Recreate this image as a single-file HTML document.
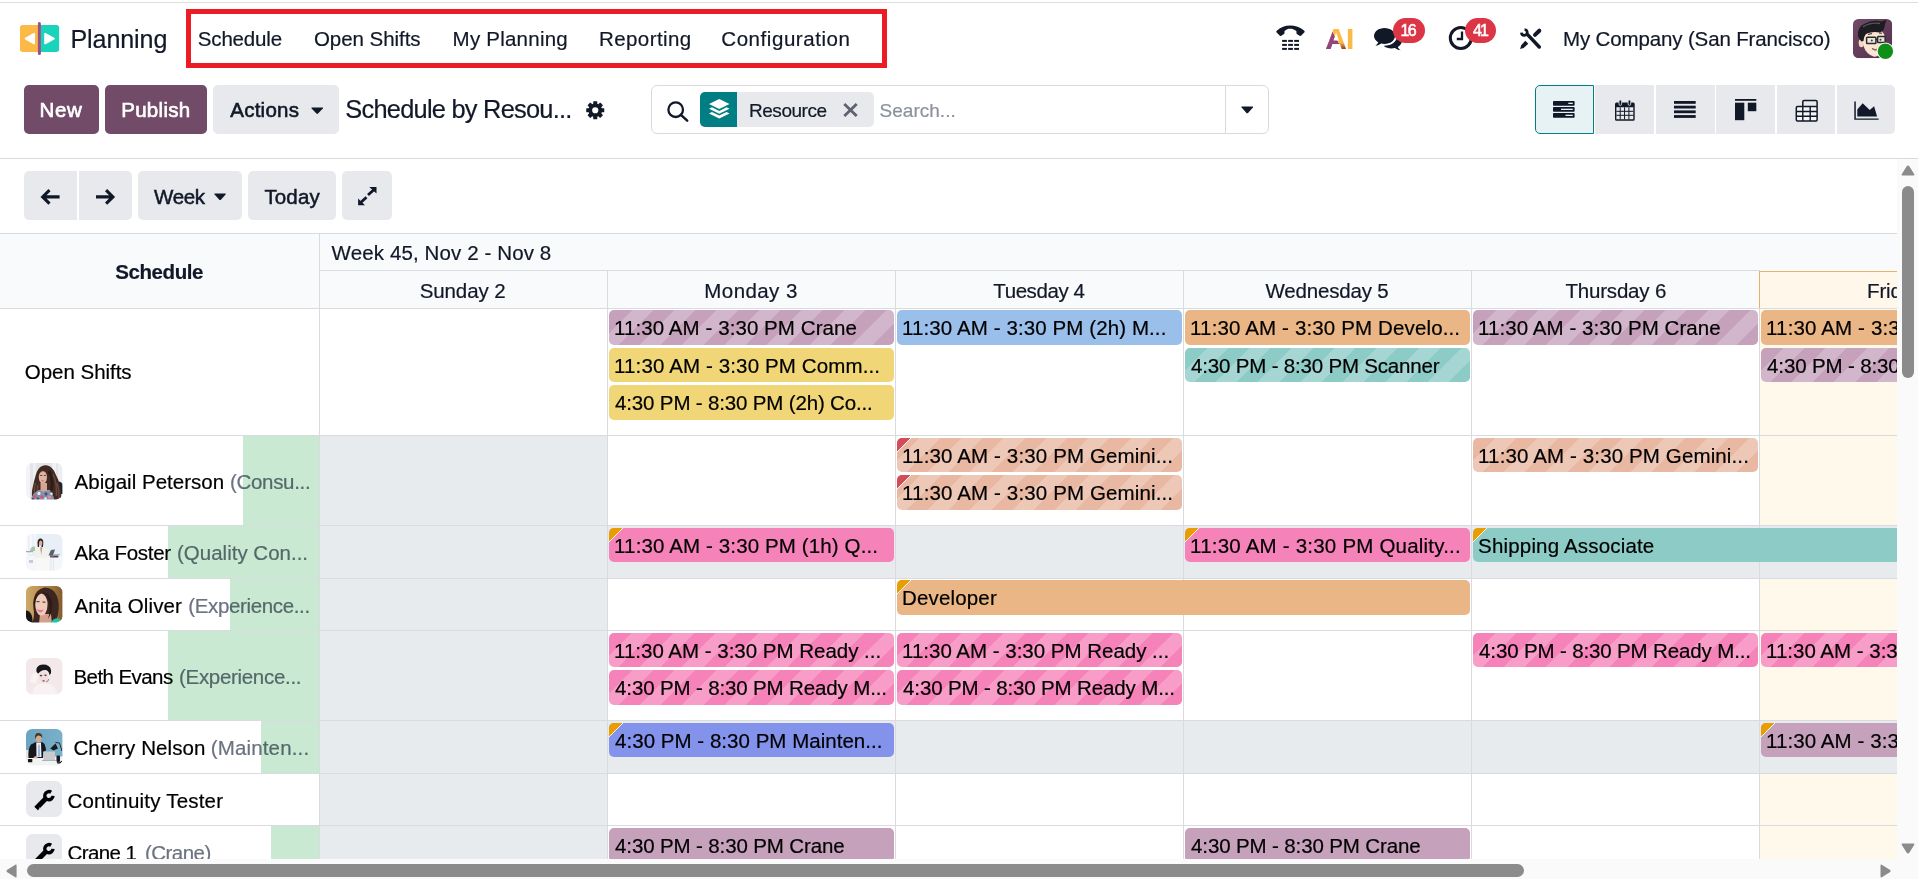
<!DOCTYPE html>
<html lang="en"><head><meta charset="utf-8"><title>Planning - Schedule by Resource</title>
<style>
*{box-sizing:border-box}
html,body{margin:0;padding:0}
body{width:1918px;height:879px;overflow:hidden;background:#fff;position:relative;font-family:"Liberation Sans",sans-serif;color:#111827;font-size:20.5px}
.abs{position:absolute}
.t{position:absolute;white-space:pre;line-height:1;display:block;-webkit-text-stroke:0.200px currentColor}
.btn{position:absolute;border-radius:5px;background:#e7e9ed}
.btn.pri{background:#714b67}
.ln{position:absolute;background:#d9dbde}
.pill{position:absolute;height:34.6px;border-radius:5px;overflow:hidden}
.pill.st{background-image:repeating-linear-gradient(-45deg,rgba(255,255,255,0) 0,rgba(255,255,255,0) 15px,rgba(255,255,255,.22) 15px,rgba(255,255,255,.22) 30px)}
.pill .t{color:#000}
.flag{position:absolute;left:0;top:0;width:17px;height:17px;background:linear-gradient(135deg,#e99d00 0,#e99d00 9.200px,rgba(255,255,255,.9) 9.200px,rgba(255,255,255,.9) 10.400px,rgba(255,255,255,0) 10.400px)}
.flag.red{background:linear-gradient(135deg,#d44c59 0,#d44c59 9.200px,rgba(255,255,255,.9) 9.200px,rgba(255,255,255,.9) 10.400px,rgba(255,255,255,0) 10.400px)}
.av{position:absolute;width:36.4px;height:36.4px;border-radius:6px;overflow:hidden}
svg{position:absolute;overflow:visible}
</style></head>
<body>
<!-- navbar -->
<div class="abs" style="left:0;top:2px;width:1918px;height:1px;background:#dedede"></div><svg style="left:20px;top:21px" width="40" height="35" viewBox="0 0 40 35"><path d="M2.700 3.900H18.400V31H2.700Q0 31 0 28.300V6.600Q0 3.900 2.700 3.900Z" fill="#fbb945"/><path d="M20.400 3.900H36.400Q39.100 3.900 39.100 6.600V28.300Q39.100 31 36.400 31H20.400Z" fill="#1ad3bb"/><rect x="17.900" y="0.900" width="3" height="33.100" rx="1.500" fill="#985184"/><path d="M14.100 12.800V22.400L5.600 17.600Z" fill="#fff" stroke="#fff" stroke-width="1.800" stroke-linejoin="round"/><path d="M25.100 12.800V22.400L33.800 17.600Z" fill="#fff" stroke="#fff" stroke-width="1.800" stroke-linejoin="round"/></svg><span class="t" style="left:70.5px;top:27.1px;font-size:25.1px;letter-spacing:-0.114px;">Planning</span><div class="abs" style="left:186px;top:9px;width:700.5px;height:59px;border:5px solid #ec1c24"></div><span class="t" style="left:197.8px;top:29.2px;font-size:20.5px;letter-spacing:-0.171px;">Schedule</span><span class="t" style="left:313.9px;top:29.2px;font-size:20.5px;letter-spacing:-0.040px;">Open Shifts</span><span class="t" style="left:452.6px;top:29.2px;font-size:20.5px;letter-spacing:0.230px;">My Planning</span><span class="t" style="left:599.0px;top:29.2px;font-size:20.5px;letter-spacing:0.412px;">Reporting</span><span class="t" style="left:721.3px;top:29.2px;font-size:20.5px;letter-spacing:0.558px;">Configuration</span><svg style="left:1276px;top:25px" width="29" height="26" viewBox="0 0 29 26"><path d="M0.200 6.900Q0.200 6.200 1 5.600C5 2 9 0.500 14.100 0.500C19.500 0.500 24 2 28 5.600Q28.800 6.200 28.700 6.900L25.300 10.500Q24.500 11.200 23.600 10.700L20.900 9.100Q20.500 8.800 20.500 8.200L20.400 6.100C18 4.300 16 3.800 14.100 3.800C12 3.800 10.500 4.300 8.550 6.100L8.450 8.200Q8.400 8.800 8 9.100L5.300 10.700Q4.400 11.200 3.600 10.500Z" fill="#111827"/><rect x="6.10" y="14.90" width="4.800" height="2" fill="#111827"/><rect x="12.15" y="14.90" width="4.800" height="2" fill="#111827"/><rect x="18.20" y="14.90" width="4.800" height="2" fill="#111827"/><rect x="6.10" y="18.90" width="4.800" height="2" fill="#111827"/><rect x="12.15" y="18.90" width="4.800" height="2" fill="#111827"/><rect x="18.20" y="18.90" width="4.800" height="2" fill="#111827"/><rect x="6.10" y="22.90" width="4.800" height="2" fill="#111827"/><rect x="12.15" y="22.90" width="4.800" height="2" fill="#111827"/><rect x="18.20" y="22.90" width="4.800" height="2" fill="#111827"/></svg><span class="t" style="left:1325.400px;top:23.900px;font-size:29.400px;font-weight:700;letter-spacing:0;line-height:1"><span style="background:linear-gradient(63.400deg,#8e4580 0,#8e4580 50%,rgba(0,0,0,0) 50%),linear-gradient(180deg,#fbb945 0,#fbb945 62%,#9a4222 80%);-webkit-background-clip:text;background-clip:text;color:transparent">A</span><span style="color:#fbb945;margin-left:-0.600px">I</span></span><svg style="left:1374px;top:28px" width="28" height="22" viewBox="0 0 28 22"><path d="M10.5 0C16.3 0 21 3.6 21 8S16.3 16 10.5 16C9.3 16 8.2 15.9 7.1 15.6 5.6 16.9 3.6 17.6 1.4 17.7 3 16.6 3.9 15.3 4.2 14.3 1.7 12.8 0 10.6 0 8 0 3.6 4.700 0 10.5 0Z" fill="#111827"/><path d="M22.8 6.2C25.9 7.500 28 9.9 28 12.700 28 15.300 26.300 17.500 23.800 18.900 24.100 19.900 25 21.100 26.600 22.200 24.400 22.100 22.400 21.400 20.900 20.100 19.800 20.400 18.700 20.600 17.500 20.600 14.300 20.600 11.500 19.500 9.600 17.800 16.800 18.100 23.100 13.900 23.100 8 23.100 7.400 23 6.800 22.800 6.200Z" fill="#111827"/></svg><div class="abs" style="left:1393.2px;top:18.3px;width:31.6px;height:24.800px;border-radius:12.400px;background:#dc3545"></div><span class="t" style="left:1400.5px;top:22.8px;font-size:16px;letter-spacing:-1.700px;color:#fff;-webkit-text-stroke:0.55px currentColor;">16</span><svg style="left:1449px;top:26px" width="24" height="24" viewBox="0 0 24 24"><circle cx="11.800" cy="12" r="10.500" fill="none" stroke="#111827" stroke-width="3"/><path d="M13 5.500V13H7.800" fill="none" stroke="#111827" stroke-width="2.300"/></svg><div class="abs" style="left:1464.6px;top:18.3px;width:31.3px;height:24.800px;border-radius:12.400px;background:#dc3545"></div><span class="t" style="left:1472.9px;top:22.8px;font-size:16px;letter-spacing:-1.700px;color:#fff;-webkit-text-stroke:0.55px currentColor;">41</span><svg style="left:1519px;top:28px" width="23" height="22" viewBox="0 0 23 22"><path d="M8.600 6.600L20.300 19" stroke="#111827" stroke-width="3.500" stroke-linecap="round" fill="none"/><path d="M5.550 1.510A2.900 2.900 0 1 1 2.410 4.650" stroke="#111827" stroke-width="2.700" fill="none"/><path d="M20.300 2.700L16 6.900" stroke="#111827" stroke-width="4" stroke-linecap="round" fill="none"/><path d="M6.300 12.800L9.300 15.700L4.700 19.900L1.100 21L2.200 17.300Z" fill="#111827"/></svg><span class="t" style="left:1563.0px;top:29.2px;font-size:20.5px;letter-spacing:-0.140px;">My Company (San Francisco)</span><svg style="left:1853px;top:18.9px" width="39.2" height="39.2" viewBox="0 0 39.2 39.2"><defs><linearGradient id="ug" x1="0" y1="0" x2="1" y2="1"><stop offset="0" stop-color="#704a67"/><stop offset="1" stop-color="#55304c"/></linearGradient><clipPath id="uc"><rect width="39.200" height="39.200" rx="5.500"/></clipPath><filter id="ub" x="-10%" y="-10%" width="120%" height="120%"><feGaussianBlur stdDeviation="0.350"/></filter></defs><g clip-path="url(#uc)"><rect width="39.200" height="39.200" fill="url(#ug)"/><g filter="url(#ub)"><ellipse cx="8.300" cy="24" rx="2.600" ry="4.200" fill="#f6d6c0"/><path d="M9.500 15Q10 10 20 10Q31.500 10 32 19Q32.500 28 28 33.500Q24 38.500 20.500 37.500Q13 35 10.500 27Q9 21 9.500 15Z" fill="#fbe4d1"/><path d="M24 27Q30 26 31 21L32 25Q30 33 25 37Z" fill="#f3cdb5"/><path d="M5 17Q4 8 12 4.500Q20 0.500 28 2.500L33.500 1Q32 5 31.500 8Q31 12 27 13.500Q20 12 14 14.500Q11 16 10.500 22L8.500 22.500Q6 21 5 17Z" fill="#1d1d21"/><path d="M10 8Q17 3 27 4.500" stroke="#55555c" stroke-width="1.300" fill="none"/><path d="M15 15.500L19 14.500M26 14L29 14.300" stroke="#2a2a2e" stroke-width="1.100" fill="none"/><rect x="13.600" y="18.200" width="9.300" height="6.300" rx="0.800" fill="#ece4df" stroke="#2a2a2c" stroke-width="1.500"/><rect x="24.600" y="17.600" width="7.600" height="6" rx="0.800" fill="#ece4df" stroke="#2a2a2c" stroke-width="1.500"/><path d="M22.900 20.500H24.600" stroke="#2a2a2c" stroke-width="1.300"/><circle cx="18.800" cy="21.500" r="1" fill="#3a3a3e"/><circle cx="27.500" cy="20.800" r="1" fill="#3a3a3e"/><path d="M19 29.500Q22 31.500 25.500 29.800Q23 33 19 29.500Z" fill="#fff" stroke="#5b3a32" stroke-width="0.700"/></g></g><circle cx="32.400" cy="32.200" r="8.700" fill="#fff"/><circle cx="32.400" cy="32.200" r="7.700" fill="#0f8f16"/></svg>
<!-- control panel -->
<div class="btn pri" style="left:24px;top:85px;width:75px;height:48.800px"></div><span class="t" style="left:39.5px;top:100.2px;font-size:20.5px;letter-spacing:0.650px;color:#fff;-webkit-text-stroke:0.65px currentColor;">New</span><div class="btn pri" style="left:104.8px;top:85px;width:102px;height:48.800px"></div><span class="t" style="left:121.2px;top:100.2px;font-size:20.5px;letter-spacing:0.300px;color:#fff;-webkit-text-stroke:0.65px currentColor;">Publish</span><div class="btn" style="left:213px;top:85px;width:126px;height:48.800px"></div><span class="t" style="left:230.2px;top:100.2px;font-size:20.5px;letter-spacing:0.267px;-webkit-text-stroke:0.6px currentColor;">Actions</span><svg style="left:311.3px;top:107px" width="12.5" height="7.2" viewBox="0 0 12.5 7.2"><path d="M1 0.6H11.5Q12.5 0.6 11.9 1.5L7.05 6.6000000000000005Q6.25 7.2 5.45 6.6000000000000005L0.6 1.5Q0 0.6 1 0.6Z" fill="#111827"/></svg><span class="t" style="left:345.3px;top:97.2px;font-size:25.4px;letter-spacing:-0.753px;">Schedule by Resou...</span><svg style="left:586.3px;top:101px" width="18.5" height="18.5" viewBox="0 0 18.5 18.5"><g transform="translate(9.250 9.250) scale(0.970)" fill="#111827"><path fill-rule="evenodd" d="M0 -7A7 7 0 1 0 0 7A7 7 0 1 0 0 -7ZM0 -3.200A3.200 3.200 0 1 1 0 3.200A3.200 3.200 0 1 1 0 -3.200Z"/><rect x="-2.100" y="-9.300" width="4.200" height="4" rx="0.600" transform="rotate(0)"/><rect x="-2.100" y="-9.300" width="4.200" height="4" rx="0.600" transform="rotate(45)"/><rect x="-2.100" y="-9.300" width="4.200" height="4" rx="0.600" transform="rotate(90)"/><rect x="-2.100" y="-9.300" width="4.200" height="4" rx="0.600" transform="rotate(135)"/><rect x="-2.100" y="-9.300" width="4.200" height="4" rx="0.600" transform="rotate(180)"/><rect x="-2.100" y="-9.300" width="4.200" height="4" rx="0.600" transform="rotate(225)"/><rect x="-2.100" y="-9.300" width="4.200" height="4" rx="0.600" transform="rotate(270)"/><rect x="-2.100" y="-9.300" width="4.200" height="4" rx="0.600" transform="rotate(315)"/></g></svg><div class="abs" style="left:651px;top:85px;width:618px;height:48.800px;border:1px solid #d8dadd;border-radius:6px"></div><div class="abs" style="left:1225px;top:86px;width:1px;height:47px;background:#d8dadd"></div><svg style="left:667px;top:100.5px" width="22" height="21" viewBox="0 0 22 21"><circle cx="8.700" cy="8.700" r="7.300" fill="none" stroke="#111827" stroke-width="2.300"/><path d="M13.900 13.900L20.200 19.700" stroke="#111827" stroke-width="2.500" stroke-linecap="round"/></svg><div class="abs" style="left:700px;top:92px;width:173.500px;height:34.800px;border-radius:5px;background:#e7e9ed;overflow:hidden"><div style="width:37px;height:100%;background:#017e84"></div></div><svg style="left:709px;top:98.7px" width="20.5" height="20.5" viewBox="0 0 20.5 20.5"><path d="M10.250 0L20.500 5L10.250 10L0 5Z" fill="#fff"/><path d="M2.900 8.300L10.250 11.900L17.600 8.300L20.500 9.700L10.250 14.700L0 9.700Z" fill="#fff"/><path d="M2.900 13L10.250 16.600L17.600 13L20.500 14.400L10.250 19.400L0 14.400Z" fill="#fff"/></svg><span class="t" style="left:749.0px;top:101.2px;font-size:19px;letter-spacing:-0.471px;">Resource</span><svg style="left:843px;top:103px" width="15" height="14" viewBox="0 0 15 14"><path d="M1.300 1L13.700 13M13.700 1L1.300 13" stroke="#5d6170" stroke-width="2.800" fill="none"/></svg><span class="t" style="left:879.5px;top:101.2px;font-size:19px;letter-spacing:0.025px;color:#8c919d;">Search...</span><svg style="left:1240.8px;top:105.8px" width="12.5" height="7.5" viewBox="0 0 12.5 7.5"><path d="M1 0.6H11.5Q12.5 0.6 11.9 1.5L7.05 6.9Q6.25 7.5 5.45 6.9L0.6 1.5Q0 0.6 1 0.6Z" fill="#111827"/></svg><div class="abs" style="left:1534.7px;top:85px;width:59.0px;height:48.800px;background:#e6f2f3;border:1.300px solid #017e84;border-radius:5px 0 0 5px"></div><div class="abs" style="left:1594.6px;top:85px;width:59.2px;height:48.800px;background:#e7e9ed;border-radius:0"></div><div class="abs" style="left:1655.8px;top:85px;width:58.9px;height:48.800px;background:#e7e9ed;border-radius:0"></div><div class="abs" style="left:1716px;top:85px;width:58.7px;height:48.800px;background:#e7e9ed;border-radius:0"></div><div class="abs" style="left:1776.7px;top:85px;width:58.8px;height:48.800px;background:#e7e9ed;border-radius:0"></div><div class="abs" style="left:1836.7px;top:85px;width:58.8px;height:48.800px;background:#e7e9ed;border-radius:0 5px 5px 0"></div><svg style="left:1552.8px;top:101.3px" width="22" height="17" viewBox="0 0 22 17"><rect x="0" y="0" width="21.600" height="4.800" rx="0.800" fill="#111827"/><rect x="0" y="6" width="21.600" height="4.800" rx="0.800" fill="#111827"/><rect x="0" y="12" width="21.600" height="4.800" rx="0.800" fill="#111827"/><rect x="15.300" y="1.700" width="4.500" height="1.300" fill="#e6f2f3"/><rect x="8" y="7.700" width="11.800" height="1.300" fill="#e6f2f3"/><rect x="12.500" y="13.700" width="7.300" height="1.300" fill="#e6f2f3"/></svg><svg style="left:1614.7px;top:99.7px" width="20" height="21" viewBox="0 0 20 21"><path fill-rule="evenodd" d="M1.500 2.500H18.200Q19.700 2.500 19.700 4V19.200Q19.700 20.700 18.200 20.700H1.500Q0 20.700 0 19.200V4Q0 2.500 1.500 2.500ZM1.400 7.300V19.300H18.300V7.300Z" fill="#111827"/><rect x="4.699999999999999" y="7.300" width="1" height="12" fill="#111827"/><rect x="9.05" y="7.300" width="1" height="12" fill="#111827"/><rect x="13.399999999999999" y="7.300" width="1" height="12" fill="#111827"/><rect x="1.400" y="10.8" width="17" height="1" fill="#111827"/><rect x="1.400" y="14.8" width="17" height="1" fill="#111827"/><rect x="4" y="0" width="2.600" height="5.400" rx="1.300" fill="#111827" stroke="#e7e9ed" stroke-width="0.800"/><rect x="13.100" y="0" width="2.600" height="5.400" rx="1.300" fill="#111827" stroke="#e7e9ed" stroke-width="0.800"/></svg><svg style="left:1674.3px;top:100.5px" width="22" height="18" viewBox="0 0 22 18"><rect x="0" y="0.00" width="21.700" height="2.800" fill="#111827"/><rect x="0" y="4.70" width="21.700" height="2.800" fill="#111827"/><rect x="0" y="9.40" width="21.700" height="2.800" fill="#111827"/><rect x="0" y="14.10" width="21.700" height="2.800" fill="#111827"/></svg><svg style="left:1734.7px;top:98.8px" width="22" height="22" viewBox="0 0 22 22"><rect x="0" y="0" width="21.300" height="1.800" fill="#111827"/><rect x="0" y="3.700" width="9.300" height="17.500" fill="#111827"/><rect x="12.800" y="3.700" width="8.500" height="8.500" fill="#111827"/></svg><svg style="left:1795.5px;top:99.7px" width="21.5" height="21.5" viewBox="0 0 21.5 21.5"><rect x="0.3" y="6.6" width="20.8" height="14.3" rx="1.200" fill="#f4f5f7"/><path d="M6.8 6.6V1.7999999999999998Q6.8 0.6 8.0 0.6H19.900000000000002Q21.1 0.6 21.1 1.7999999999999998V19.7Q21.1 20.9 19.900000000000002 20.9H1.5Q0.3 20.9 0.3 19.7V7.8Q0.3 6.6 1.5 6.6H21.1" fill="none" stroke="#111827" stroke-width="1.500"/><path d="M6.8 6.6V20.9M14.2 6.6V20.9M0.3 11.5H21.1M0.3 16.2H21.1" fill="none" stroke="#111827" stroke-width="1.400"/></svg><svg style="left:1854px;top:100.8px" width="25" height="19" viewBox="0 0 25 19"><path d="M0.300 0.500H1.800V17.400H24.600V18.800H0.300Z" fill="#111827"/><path d="M3.300 15.400V8.400L8.700 2.200L15.700 8.900L20.100 5.200L23.100 15.400Z" fill="#111827"/></svg><div class="abs" style="left:0;top:158px;width:1918px;height:1px;background:#d8dadd"></div>
<!-- gantt toolbar -->
<div class="btn" style="left:24px;top:171px;width:52.700px;height:49px;border-radius:5px 0 0 5px"></div><div class="btn" style="left:79px;top:171px;width:52.800px;height:49px;border-radius:0 5px 5px 0"></div><svg style="left:41.3px;top:189px" width="19" height="16" viewBox="0 0 19 16"><path d="M18.600 7.900H2.400M8.500 1.200L1.700 7.900L8.500 14.600" fill="none" stroke="#111827" stroke-width="3.100"/></svg><svg style="left:96px;top:189px" width="19" height="16" viewBox="0 0 19 16"><path d="M0 7.900H16.200M10.100 1.200L16.900 7.900L10.100 14.600" fill="none" stroke="#111827" stroke-width="3.100"/></svg><div class="btn" style="left:138px;top:171px;width:104px;height:49px"></div><span class="t" style="left:154.0px;top:186.9px;font-size:20.5px;letter-spacing:-0.333px;-webkit-text-stroke:0.5px currentColor;">Week</span><svg style="left:214.2px;top:192.5px" width="12.2" height="7.4" viewBox="0 0 12.2 7.4"><path d="M1 0.6H11.2Q12.2 0.6 11.6 1.5L6.8999999999999995 6.800000000000001Q6.1 7.4 5.3 6.800000000000001L0.6 1.5Q0 0.6 1 0.6Z" fill="#111827"/></svg><div class="btn" style="left:248px;top:171px;width:87.800px;height:49px"></div><span class="t" style="left:264.4px;top:186.9px;font-size:20.5px;letter-spacing:0.150px;-webkit-text-stroke:0.5px currentColor;">Today</span><div class="btn" style="left:342px;top:171px;width:49.700px;height:49px"></div><svg style="left:358.3px;top:186.5px" width="19" height="19" viewBox="0 0 19 19"><path d="M15.600 3L10 8M3 15.200L8.500 10.200" stroke="#111827" stroke-width="2.800" fill="none"/><path d="M11.300 -0.100H18.500V6.500Z" fill="#111827"/><path d="M0.100 11.400V18.200H7Z" fill="#111827"/></svg>
<!-- gantt view -->
<div class="abs" style="left:0;top:233px;width:1897px;height:626px;overflow:hidden"><div class="abs" style="left:0;top:-233px;width:2400px;height:900px"><div class="abs" style="left:0;top:234px;width:1897px;height:74px;background:#f9fafb"></div><div class="abs" style="left:1760px;top:309px;width:288px;height:560px;background:#fff9ec"></div><div class="abs" style="left:320px;top:436.3px;width:287px;height:90.0px;background:#e8ebee"></div><div class="abs" style="left:320px;top:526.3px;width:1780px;height:52.5px;background:#e8ebee"></div><div class="abs" style="left:320px;top:578.8px;width:287px;height:52.5px;background:#e8ebee"></div><div class="abs" style="left:320px;top:631.3px;width:287px;height:90.0px;background:#e8ebee"></div><div class="abs" style="left:320px;top:721.3px;width:1780px;height:52.5px;background:#e8ebee"></div><div class="abs" style="left:320px;top:773.8px;width:287px;height:52.5px;background:#e8ebee"></div><div class="abs" style="left:320px;top:826.3px;width:287px;height:52.5px;background:#e8ebee"></div><div class="ln" style="left:0;top:233px;width:1897px;height:1px"></div><div class="ln" style="left:320px;top:270px;width:1440px;height:1px"></div><div class="ln" style="left:0;top:308px;width:1897px;height:1px"></div><div class="ln" style="left:0;top:435px;width:1897px;height:1px"></div><div class="ln" style="left:0;top:525px;width:1897px;height:1px"></div><div class="ln" style="left:0;top:578px;width:1897px;height:1px"></div><div class="ln" style="left:0;top:630px;width:1897px;height:1px"></div><div class="ln" style="left:0;top:720px;width:1897px;height:1px"></div><div class="ln" style="left:0;top:773px;width:1897px;height:1px"></div><div class="ln" style="left:0;top:825px;width:1897px;height:1px"></div><div class="ln" style="left:319px;top:234px;width:1px;height:640px"></div><div class="ln" style="left:607px;top:271px;width:1px;height:600px"></div><div class="ln" style="left:895px;top:271px;width:1px;height:600px"></div><div class="ln" style="left:1183px;top:271px;width:1px;height:600px"></div><div class="ln" style="left:1471px;top:271px;width:1px;height:600px"></div><div class="ln" style="left:1759px;top:271px;width:1px;height:600px"></div><div class="abs" style="left:1759px;top:270.500px;width:289px;height:37.500px;background:#fff8ea;border-top:1.500px solid #e9b06a;border-left:1.500px solid #e9b06a"></div><span class="t" style="left:115.3px;top:261.9px;font-size:20.5px;letter-spacing:-0.429px;font-weight:700;">Schedule</span><span class="t" style="left:331.6px;top:243.2px;font-size:20.5px;letter-spacing:0.114px;">Week 45, Nov 2 - Nov 8</span><span class="t" style="left:419.7px;top:280.8px;font-size:20.5px;letter-spacing:-0.100px;">Sunday 2</span><span class="t" style="left:704.3px;top:280.8px;font-size:20.5px;letter-spacing:0.429px;">Monday 3</span><span class="t" style="left:993.3px;top:280.8px;font-size:20.5px;letter-spacing:-0.412px;">Tuesday 4</span><span class="t" style="left:1265.4px;top:280.8px;font-size:20.5px;letter-spacing:-0.160px;">Wednesday 5</span><span class="t" style="left:1565.4px;top:280.8px;font-size:20.5px;letter-spacing:-0.178px;">Thursday 6</span><span class="t" style="left:1867.0px;top:280.8px;font-size:20.5px;letter-spacing:-0.143px;">Friday 7</span><span class="t" style="left:24.8px;top:362.2px;font-size:20.5px;letter-spacing:-0.030px;color:#000;">Open Shifts</span><svg style="left:25.8px;top:463.1px" width="36.4" height="36.4" viewBox="0 0 36.4 36.4"><defs><clipPath id="c_abigail"><rect width="36.4" height="36.4" rx="6.200"/></clipPath><filter id="b_abigail" x="-10%" y="-10%" width="120%" height="120%"><feGaussianBlur stdDeviation="0.550"/></filter></defs><g clip-path="url(#c_abigail)"><g filter="url(#b_abigail)"><rect x="-2" y="-2" width="41" height="41" fill="#e2e4e8"/><rect x="-2" y="-2" width="6" height="41" fill="#f3f4f6"/><rect x="7" y="-2" width="3" height="41" fill="#eef0f3"/><rect x="26" y="-2" width="4" height="24" fill="#f0f1f4"/><rect x="32" y="-2" width="6" height="22" fill="#eceef1"/><path d="M33 18.500Q37.500 19.500 37.500 25V31H33Z" fill="#1d2430"/><path d="M12.500 6Q16 1.500 21.500 2.500Q27 4 29.500 11Q33 17 34 23Q36 30 35 38H26L23.500 27L12 27.500L9.500 38H6.500Q5 30 7 23Q8 18 9.500 13Q10.500 8.500 12.500 6Z" fill="#3f2a24"/><path d="M9.500 20Q7.500 27 8.500 34M12 22Q10.500 28 11 33" stroke="#6a4a3c" stroke-width="1.300" fill="none"/><path d="M27 11Q31 20 30.500 33M31 20Q33.500 27 33 35" stroke="#68483a" stroke-width="1.400" fill="none"/><path d="M23 8Q27.500 16 25.500 27" stroke="#2c1b17" stroke-width="2.600" fill="none"/><path d="M14.500 20H21V28.500H14.500Z" fill="#d3a592"/><ellipse cx="16.900" cy="14.300" rx="4.100" ry="6.300" fill="#deb3a2"/><path d="M12.600 12Q15.500 6 21.500 9.500Q19.500 8 16.500 8.600Q13.800 9.300 12.600 12Z" fill="#3f2a24"/><rect x="14" y="12" width="2.200" height="0.900" fill="#5f4238"/><rect x="17.800" y="12" width="2.200" height="0.900" fill="#5f4238"/><rect x="15" y="17.300" width="3.200" height="1.100" rx="0.500" fill="#d47f7c"/><path d="M4.500 38Q6.500 29 13.500 27Q17.500 29.500 22 27Q27 28.500 28.500 38Z" fill="#8590ab"/><circle cx="9" cy="33.500" r="1.700" fill="#d8566c"/><circle cx="13" cy="30.500" r="1.500" fill="#eef0f4"/><circle cx="16" cy="34" r="1.700" fill="#d8566c"/><circle cx="20" cy="31" r="1.500" fill="#3f4d75"/><circle cx="23.500" cy="34" r="1.600" fill="#e98a9a"/><circle cx="12" cy="35.800" r="1.300" fill="#3f4d75"/><circle cx="25.500" cy="30.800" r="1.200" fill="#eef0f4"/><circle cx="19.500" cy="35.500" r="1.200" fill="#eef0f4"/><circle cx="7" cy="36" r="1.200" fill="#3f4d75"/></g></g></svg><span class="t" style="left:74.5px;top:471.7px;font-size:20.5px;letter-spacing:0.027px;color:#000;">Abigail Peterson</span><span class="t" style="left:230.0px;top:471.7px;font-size:20.5px;letter-spacing:-0.325px;color:#6b7280;">(Consu...</span><svg style="left:25.8px;top:534.3px" width="36.4" height="36.4" viewBox="0 0 36.4 36.4"><defs><clipPath id="c_aka"><rect width="36.4" height="36.4" rx="6.200"/></clipPath><filter id="b_aka" x="-10%" y="-10%" width="120%" height="120%"><feGaussianBlur stdDeviation="0.550"/></filter></defs><g clip-path="url(#c_aka)"><g filter="url(#b_aka)"><rect x="-2" y="-2" width="41" height="41" fill="#e9eff6"/><rect x="-2" y="-2" width="4" height="41" fill="#f7f9fb"/><rect x="3.500" y="-2" width="3" height="22" fill="#f6f8fb"/><rect x="8" y="-2" width="2" height="18" fill="#f3f6fa"/><path d="M-2 22H38V38H-2Z" fill="#f4f6f9"/><path d="M4 17Q5 12 8 12.500Q9.500 12 9 17Z" fill="#a9c69c"/><rect x="-1" y="17.200" width="8" height="1" fill="#8d969e"/><path d="M3 26H7V29H3Z" fill="#c6ccd5"/><path d="M11.500 9Q11.500 4.500 14.500 4.500Q17.500 4.500 17.300 9L17 13H15.500L15.500 8.500Q14 8 13.300 9.500L13 13H11.800Z" fill="#2e2522"/><ellipse cx="14.700" cy="9" rx="1.700" ry="2.500" fill="#d9ae98"/><path d="M9.500 15Q12 12.500 14 13L15.200 21L16.500 13Q19 13 21 16L24.500 21L23.500 22.300L20 20L20.500 24H9Q8.500 18 9.500 15Z" fill="#f3f1ec"/><path d="M14 13.300L15.300 21L16.400 13.300Z" fill="#cc9c84"/><path d="M22.500 21.500L25 16L29 15.500L27 21.500Z" fill="#59606b"/><rect x="24" y="21.500" width="8.500" height="2" rx="0.800" fill="#3d4556"/><rect x="25" y="22" width="2.500" height="1" fill="#c0524e"/><rect x="28" y="20" width="6" height="1.200" fill="#aeb4bb"/><path d="M10 24H23V38H10Z" fill="#f8f8f7"/><rect x="24.500" y="24" width="1" height="14" fill="#e0e5ec"/><rect x="27" y="24" width="1" height="14" fill="#e3e8ee"/></g></g></svg><span class="t" style="left:74.5px;top:543.0px;font-size:20.5px;letter-spacing:-0.278px;color:#000;">Aka Foster</span><span class="t" style="left:177.0px;top:543.0px;font-size:20.5px;letter-spacing:0.000px;color:#6b7280;">(Quality Con...</span><svg style="left:25.8px;top:585.8px" width="36.4" height="36.4" viewBox="0 0 36.4 36.4"><defs><clipPath id="c_anita"><rect width="36.4" height="36.4" rx="6.200"/></clipPath><filter id="b_anita" x="-10%" y="-10%" width="120%" height="120%"><feGaussianBlur stdDeviation="0.550"/></filter></defs><g clip-path="url(#c_anita)"><g filter="url(#b_anita)"><defs><linearGradient id="ag" x1="0" y1="0" x2="1" y2="0"><stop offset="0" stop-color="#d0ad6c"/><stop offset="0.450" stop-color="#b98e4f"/><stop offset="1" stop-color="#7b5429"/></linearGradient></defs><rect x="-2" y="-2" width="41" height="41" fill="url(#ag)"/><path d="M-2 24Q4 24 6 30L7 38H-2Z" fill="#191313"/><path d="M8 12Q10 3 19 1.500Q28 2 31 10Q34 18 32 28Q31 34 28 38H6Q9 30 7.500 22Q6.500 16 8 12Z" fill="#3a2520"/><path d="M14 28H25L26 38H13Z" fill="#d4a08b"/><path d="M9.500 15Q11 8 15.500 7.500Q20 9 21.500 16Q22 23 19 28Q15.500 31 12 28Q8.500 23 9.500 15Z" fill="#efcbbb"/><path d="M15.500 6Q21 8 23 17Q24.500 26 22 33Q27 26 26 15Q23 6 15.500 6Z" fill="#2f1c18"/><path d="M9.500 15Q11 9 15.500 7Q11 7.500 8.500 12Q7 17 8 24Q8.500 19 9.500 15Z" fill="#2f1c18"/><rect x="10.500" y="15" width="3" height="1.200" fill="#5a4038"/><rect x="16.500" y="15.500" width="3" height="1.200" fill="#5a4038"/><path d="M10.800 23Q14 25 17.600 23.200Q16.500 26.500 14 26.500Q11.800 26.200 10.800 23Z" fill="#e27a90"/><path d="M24 38Q27 31.500 33 32.500L38 38Z" fill="#22c3a0"/></g></g></svg><span class="t" style="left:74.5px;top:595.5px;font-size:20.5px;letter-spacing:0.136px;color:#000;">Anita Oliver</span><span class="t" style="left:188.2px;top:595.5px;font-size:20.5px;letter-spacing:-0.346px;color:#6b7280;">(Experience...</span><svg style="left:25.8px;top:658.1px" width="36.4" height="36.4" viewBox="0 0 36.4 36.4"><defs><clipPath id="c_beth"><rect width="36.4" height="36.4" rx="6.200"/></clipPath><filter id="b_beth" x="-10%" y="-10%" width="120%" height="120%"><feGaussianBlur stdDeviation="0.550"/></filter></defs><g clip-path="url(#c_beth)"><g filter="url(#b_beth)"><rect x="-2" y="-2" width="41" height="41" fill="#f3e9eb"/><path d="M4 24Q5 16 10 14.500L12.500 19Q10 21 10.500 26Z" fill="#faf3f4"/><path d="M6 38Q7 28 14 25.500H22Q30 28 32 38Z" fill="#f9f2f3"/><ellipse cx="17.700" cy="18.700" rx="4.600" ry="5.800" fill="#f1dedf"/><path d="M10.300 13Q10 7 17 6.500Q24 6.500 25 12Q25.500 16 23.500 17Q23 13 20 12Q15 11.500 12.500 15.500Q11 15.500 10.300 13Z" fill="#15131a"/><ellipse cx="15" cy="17.600" rx="1.300" ry="0.800" fill="#4a3c44"/><ellipse cx="19.500" cy="17.200" rx="1.300" ry="0.800" fill="#4a3c44"/><ellipse cx="17.600" cy="22.800" rx="1.400" ry="0.900" fill="#c4587a"/><path d="M20 24Q22.500 23.500 22.800 21" stroke="#6b5a60" stroke-width="0.700" fill="none"/></g></g></svg><span class="t" style="left:73.5px;top:666.7px;font-size:20.5px;letter-spacing:-0.578px;color:#000;">Beth Evans</span><span class="t" style="left:179.0px;top:666.7px;font-size:20.5px;letter-spacing:-0.308px;color:#6b7280;">(Experience...</span><svg style="left:25.8px;top:729.3px" width="36.4" height="36.4" viewBox="0 0 36.4 36.4"><defs><clipPath id="c_cherry"><rect width="36.4" height="36.4" rx="6.200"/></clipPath><filter id="b_cherry" x="-10%" y="-10%" width="120%" height="120%"><feGaussianBlur stdDeviation="0.550"/></filter></defs><g clip-path="url(#c_cherry)"><g filter="url(#b_cherry)"><defs><linearGradient id="cg" x1="0" y1="0" x2="1" y2="0"><stop offset="0" stop-color="#6aa4c1"/><stop offset="1" stop-color="#7ab0ca"/></linearGradient></defs><rect x="-2" y="-2" width="41" height="41" fill="url(#cg)"/><rect x="-2" y="27.500" width="41" height="11" fill="#f1f3f5"/><rect x="0" y="21" width="2.500" height="8" fill="#e8e4d6"/><path d="M2.500 29Q2 19 5 15.500L9.500 13.300H16.500L18.500 15Q20 19 20 21.500L17 23V29Z" fill="#17171c"/><path d="M10.300 13.500H15L15.500 28H10.500Z" fill="#eef1f5"/><path d="M12.200 15.500H13.700L14 27.500H12Z" fill="#8fb2da"/><ellipse cx="12.600" cy="9.600" rx="2.700" ry="3.700" fill="#d8a98f"/><path d="M9 9Q8.500 4 12.500 4Q16.500 4 16.300 9Q15.500 6.500 12.700 6.500Q10 6.500 9.600 10Z" fill="#4a3526"/><path d="M7.500 28.500Q9.500 26 12 27.500L11 29.500H7.500Z" fill="#e0b59f"/><path d="M17.300 22.500H29V31H17.300Z" fill="#c9cacd"/><path d="M16 31H30V32H16Z" fill="#aeb1b6"/><path d="M24.300 19.500L29.500 14.500L32 19.500L27.500 21.500Z" fill="#1b1b1f"/><path d="M29.500 13.500L33.500 14L36 22" stroke="#2a2a2f" stroke-width="1" fill="none"/><rect x="30.500" y="26.500" width="3.500" height="6.500" rx="1" fill="#17171b"/><path d="M31 33.500Q34 35 36 32" stroke="#17171b" stroke-width="1.300" fill="none"/><rect x="2" y="30" width="4.300" height="3.300" rx="0.600" fill="#131317"/></g></g></svg><span class="t" style="left:73.5px;top:738.0px;font-size:20.5px;letter-spacing:0.067px;color:#000;">Cherry Nelson</span><span class="t" style="left:210.7px;top:738.0px;font-size:20.5px;letter-spacing:0.160px;color:#6b7280;">(Mainten...</span><div class="abs" style="left:25.8px;top:780.9px;width:36.200px;height:36.200px;border-radius:6.500px;background:#e7e9ed"></div><svg style="left:25.8px;top:780.9px" width="36.2" height="36.2" viewBox="0 0 36.2 36.2"><path d="M20.600 16.800L10.100 27.600" stroke="#000" stroke-width="5" fill="none"/><path d="M26.99 14.91A4.100 4.100 0 1 1 25.13 11.26" stroke="#000" stroke-width="3.400" fill="none"/><circle cx="13.700" cy="27.200" r="0.800" fill="#b9bcc4"/></svg><span class="t" style="left:67.5px;top:790.5px;font-size:20.5px;letter-spacing:0.200px;color:#000;">Continuity Tester</span><div class="abs" style="left:25.8px;top:834.2px;width:36.200px;height:36.200px;border-radius:6.500px;background:#e7e9ed"></div><svg style="left:25.8px;top:834.2px" width="36.2" height="36.2" viewBox="0 0 36.2 36.2"><path d="M20.600 16.800L10.100 27.600" stroke="#000" stroke-width="5" fill="none"/><path d="M26.99 14.91A4.100 4.100 0 1 1 25.13 11.26" stroke="#000" stroke-width="3.400" fill="none"/><circle cx="13.700" cy="27.200" r="0.800" fill="#b9bcc4"/></svg><span class="t" style="left:67.5px;top:843.0px;font-size:20.5px;letter-spacing:-0.583px;color:#000;">Crane 1</span><span class="t" style="left:145.0px;top:843.0px;font-size:20.5px;letter-spacing:-0.533px;color:#6b7280;">(Crane)</span><div class="abs" style="left:243px;top:436px;width:76px;height:89px;background:#c9e9d2;mix-blend-mode:multiply"></div><div class="abs" style="left:168px;top:526px;width:151px;height:52px;background:#c9e9d2;mix-blend-mode:multiply"></div><div class="abs" style="left:230px;top:579px;width:89px;height:51px;background:#c9e9d2;mix-blend-mode:multiply"></div><div class="abs" style="left:168px;top:631px;width:151px;height:89px;background:#c9e9d2;mix-blend-mode:multiply"></div><div class="abs" style="left:261px;top:721px;width:58px;height:52px;background:#c9e9d2;mix-blend-mode:multiply"></div><div class="abs" style="left:271px;top:826px;width:48px;height:60px;background:#c9e9d2;mix-blend-mode:multiply"></div><div class="pill st" style="left:609.10px;top:310.30px;width:284.85px;background-color:#c5a1bc"><span class="t" style="left:5.0px;top:8.1px;font-size:20.5px;letter-spacing:0.070px;">11:30 AM - 3:30 PM Crane</span></div><div class="pill" style="left:609.10px;top:347.80px;width:284.85px;background-color:#f1d677"><span class="t" style="left:5.0px;top:8.1px;font-size:20.5px;letter-spacing:0.124px;">11:30 AM - 3:30 PM Comm...</span></div><div class="pill" style="left:609.10px;top:385.30px;width:284.85px;background-color:#f1d677"><span class="t" style="left:6.0px;top:8.1px;font-size:20.5px;letter-spacing:-0.163px;">4:30 PM - 8:30 PM (2h) Co...</span></div><div class="pill" style="left:897.10px;top:310.30px;width:284.85px;background-color:#9abfeb"><span class="t" style="left:5.0px;top:8.1px;font-size:20.5px;letter-spacing:0.096px;">11:30 AM - 3:30 PM (2h) M...</span></div><div class="pill" style="left:1185.10px;top:310.30px;width:284.85px;background-color:#eab685"><span class="t" style="left:5.0px;top:8.1px;font-size:20.5px;letter-spacing:0.137px;">11:30 AM - 3:30 PM Develo...</span></div><div class="pill st" style="left:1185.10px;top:347.80px;width:284.85px;background-color:#8dcbc7"><span class="t" style="left:6.0px;top:8.1px;font-size:20.5px;letter-spacing:-0.188px;">4:30 PM - 8:30 PM Scanner</span></div><div class="pill st" style="left:1473.10px;top:310.30px;width:284.85px;background-color:#c5a1bc"><span class="t" style="left:5.0px;top:8.1px;font-size:20.5px;letter-spacing:0.057px;">11:30 AM - 3:30 PM Crane</span></div><div class="pill" style="left:1761.10px;top:310.30px;width:284.85px;background-color:#eab685"><span class="t" style="left:5.0px;top:8.1px;font-size:20.5px;letter-spacing:0.137px;">11:30 AM - 3:30 PM Develo...</span></div><div class="pill st" style="left:1761.10px;top:347.80px;width:284.85px;background-color:#c5a1bc"><span class="t" style="left:6.0px;top:8.1px;font-size:20.5px;letter-spacing:-0.141px;">4:30 PM - 8:30 PM Crane</span></div><div class="pill st" style="left:897.10px;top:437.80px;width:284.85px;background-color:#e9b8a3"><div class="flag red"></div><span class="t" style="left:5.0px;top:8.1px;font-size:20.5px;letter-spacing:0.133px;">11:30 AM - 3:30 PM Gemini...</span></div><div class="pill st" style="left:897.10px;top:475.30px;width:284.85px;background-color:#e9b8a3"><div class="flag red"></div><span class="t" style="left:5.0px;top:8.1px;font-size:20.5px;letter-spacing:0.133px;">11:30 AM - 3:30 PM Gemini...</span></div><div class="pill st" style="left:1473.10px;top:437.80px;width:284.85px;background-color:#e9b8a3"><span class="t" style="left:5.0px;top:8.1px;font-size:20.5px;letter-spacing:0.126px;">11:30 AM - 3:30 PM Gemini...</span></div><div class="pill" style="left:609.10px;top:527.80px;width:284.85px;background-color:#f582b9"><div class="flag"></div><span class="t" style="left:5.0px;top:8.1px;font-size:20.5px;letter-spacing:0.126px;">11:30 AM - 3:30 PM (1h) Q...</span></div><div class="pill" style="left:1185.10px;top:527.80px;width:284.85px;background-color:#f582b9"><div class="flag"></div><span class="t" style="left:5.0px;top:8.1px;font-size:20.5px;letter-spacing:0.211px;">11:30 AM - 3:30 PM Quality...</span></div><div class="pill" style="left:1473.10px;top:527.80px;width:860.85px;background-color:#8dcbc7"><div class="flag"></div><span class="t" style="left:5.0px;top:8.1px;font-size:20.5px;letter-spacing:0.171px;">Shipping Associate</span></div><div class="pill" style="left:897.10px;top:580.30px;width:572.85px;background-color:#eab685"><div class="flag"></div><span class="t" style="left:5.0px;top:8.1px;font-size:20.5px;letter-spacing:0.150px;">Developer</span></div><div class="pill st" style="left:609.10px;top:632.80px;width:284.85px;background-color:#f582b9"><span class="t" style="left:5.0px;top:8.1px;font-size:20.5px;letter-spacing:-0.011px;">11:30 AM - 3:30 PM Ready ...</span></div><div class="pill st" style="left:609.10px;top:670.30px;width:284.85px;background-color:#f582b9"><span class="t" style="left:6.0px;top:8.1px;font-size:20.5px;letter-spacing:-0.144px;">4:30 PM - 8:30 PM Ready M...</span></div><div class="pill st" style="left:897.10px;top:632.80px;width:284.85px;background-color:#f582b9"><span class="t" style="left:5.0px;top:8.1px;font-size:20.5px;letter-spacing:-0.011px;">11:30 AM - 3:30 PM Ready ...</span></div><div class="pill st" style="left:897.10px;top:670.30px;width:284.85px;background-color:#f582b9"><span class="t" style="left:6.0px;top:8.1px;font-size:20.5px;letter-spacing:-0.144px;">4:30 PM - 8:30 PM Ready M...</span></div><div class="pill st" style="left:1473.10px;top:632.80px;width:284.85px;background-color:#f582b9"><span class="t" style="left:6.0px;top:8.1px;font-size:20.5px;letter-spacing:-0.144px;">4:30 PM - 8:30 PM Ready M...</span></div><div class="pill st" style="left:1761.10px;top:632.80px;width:284.85px;background-color:#f582b9"><span class="t" style="left:5.0px;top:8.1px;font-size:20.5px;letter-spacing:-0.011px;">11:30 AM - 3:30 PM Ready ...</span></div><div class="pill" style="left:609.10px;top:722.80px;width:284.85px;background-color:#8393ec"><div class="flag"></div><span class="t" style="left:6.0px;top:8.1px;font-size:20.5px;letter-spacing:0.026px;">4:30 PM - 8:30 PM Mainten...</span></div><div class="pill" style="left:1761.10px;top:722.80px;width:284.85px;background-color:#c5a1bc"><div class="flag"></div><span class="t" style="left:5.0px;top:8.1px;font-size:20.5px;letter-spacing:0.070px;">11:30 AM - 3:30 PM Crane</span></div><div class="pill" style="left:609.10px;top:827.80px;width:284.85px;background-color:#c5a1bc"><span class="t" style="left:6.0px;top:8.1px;font-size:20.5px;letter-spacing:-0.132px;">4:30 PM - 8:30 PM Crane</span></div><div class="pill" style="left:1185.10px;top:827.80px;width:284.85px;background-color:#c5a1bc"><span class="t" style="left:6.0px;top:8.1px;font-size:20.5px;letter-spacing:-0.132px;">4:30 PM - 8:30 PM Crane</span></div></div></div>
<!-- scrollbars -->
<div class="abs" style="left:1897px;top:159px;width:21px;height:720px;background:#fafafa"></div><div class="abs" style="left:0;top:859px;width:1918px;height:20px;background:#fafafa"></div><div class="abs" style="left:1902px;top:185.500px;width:11.800px;height:192.500px;border-radius:6.300px;background:#8b8b8b"></div><div class="abs" style="left:27px;top:864px;width:1497px;height:13px;border-radius:6.500px;background:#8b8b8b"></div><svg style="left:1900.8px;top:165.4px" width="14" height="11" viewBox="0 0 14 11"><path d="M7 0.500Q7.800 0.500 8.300 1.300L13.300 9.300Q13.800 10.600 12.500 10.600H1.500Q0.200 10.600 0.700 9.300L5.700 1.300Q6.200 0.500 7 0.500Z" fill="#8b8b8b"/></svg><svg style="left:1901px;top:842.6px" width="14" height="11" viewBox="0 0 14 11"><path d="M7 10.600Q7.800 10.600 8.300 9.800L13.300 1.800Q13.800 0.500 12.500 0.500H1.500Q0.200 0.500 0.700 1.800L5.700 9.800Q6.200 10.600 7 10.600Z" fill="#8b8b8b"/></svg><svg style="left:6px;top:864px" width="11" height="14" viewBox="0 0 11 14"><path d="M0.500 7Q0.500 6.200 1.300 5.700L9.300 0.700Q10.600 0.200 10.600 1.500V12.500Q10.600 13.800 9.300 13.300L1.300 8.300Q0.500 7.800 0.500 7Z" fill="#8b8b8b"/></svg><svg style="left:1880px;top:864px" width="11" height="14" viewBox="0 0 11 14"><path d="M10.600 7Q10.600 6.200 9.800 5.700L1.800 0.700Q0.500 0.200 0.500 1.500V12.500Q0.500 13.800 1.800 13.300L9.800 8.300Q10.600 7.800 10.600 7Z" fill="#8b8b8b"/></svg>
</body></html>
